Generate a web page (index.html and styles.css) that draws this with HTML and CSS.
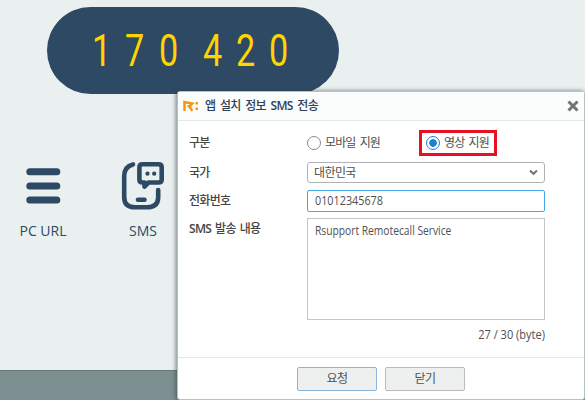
FILE: index.html
```html
<!DOCTYPE html>
<html lang="ko">
<head>
<meta charset="utf-8">
<title>SMS</title>
<link rel="stylesheet" href="styles.css">
</head>
<body>
<main class="page">
  <div class="code"><span class="one">1</span><span>7</span><span>0</span><span class="gap">4</span><span>2</span><span>0</span></div>
  <nav class="methods">
    <div class="method">
      <svg width="50" height="50" viewBox="0 0 50 50"><path d="M11.800 10.800H38.800M11.800 25H38.800M11.800 39H38.800" class="bars"/></svg>
      <span class="pc">PC URL</span>
    </div>
    <div class="method">
      <svg width="50" height="50" viewBox="0 0 50 50"><path class="line" d="M15 3.400Q6.200 5.500 6.200 15V36Q6.200 46.300 17 46.300H29Q40.200 46.300 40.200 36V29"/><path class="line" d="M20 38.700H26.500"/><path class="line" d="M24.500 3.300H40.500Q43.700 3.300 43.700 6.300V18.500Q43.700 21.500 40.500 21.500H30.500L26.500 25.500V21.500H24.500Q21.400 21.500 21.400 18.500V6.300Q21.400 3.300 24.500 3.300Z"/><circle cx="29.500" cy="12.700" r="2.100"/><circle cx="36.200" cy="12.700" r="2.100"/></svg>
      <span class="sms">SMS</span>
    </div>
  </nav>
  <footer class="bottom"></footer>
</main>
<section class="dialog">
  <header class="head">
    <svg class="logo" width="17" height="12" viewBox="0 0 17 12"><path class="r" d="M1.500 11V2L9.200 3.500L6.500 6.300L9.200 11M6.500 6.300H4.500"/><path class="dots" d="M12.500 2H15V4.500H12.500ZM12.500 7.500H15V10H12.500Z"/></svg>
    <h1>앱 설치 정보 <b>SMS</b> 전송</h1>
    <svg class="close" width="12" height="12" viewBox="0 0 12 12"><path d="M1.500 1.500L10.500 10.500M10.500 1.500L1.500 10.500"/></svg>
  </header>
  <div class="form">
    <div class="label">구분</div>
    <div class="choices"><div class="choice"><i class="radio"></i><span>모바일 지원</span></div><div class="choice marked"><i class="radio on"></i><span>영상 지원</span></div></div>
    <div class="label">국가</div>
    <div class="field select"><span>대한민국</span><svg width="9" height="7" viewBox="0 0 9 7"><path d="M1 1.500L4.500 4.800L8 1.500"/></svg></div>
    <div class="label phone">전화번호</div>
    <div class="field input"><span>01012345678</span></div>
    <div class="label content"><b>SMS</b> 발송 내용</div>
    <div class="field area"><span>Rsupport Remotecall Service</span></div>
    <div class="count">27 / 30 (byte)</div>
  </div>
  <footer class="actions"><button class="primary">요청</button><button>닫기</button></footer>
</section>
</body>
</html>
```
FILE: styles.css
```css
* { box-sizing: border-box; }
body { margin: 0; width: 585px; height: 400px; overflow: hidden; font: 12px "Open Sans", "Noto Sans CJK KR", sans-serif; color: #505050; background: #eaf0f0; }
.page { height: 400px; padding-top: 7px; display: flex; flex-direction: column; }
.code { width: 292px; height: 87px; margin-left: 47px; padding-left: 38px; border-radius: 44px; background: #2e4963; color: #ffd400; display: flex; align-items: center; font: 400 45px/87px Roboto, sans-serif; }
.code span { width: 33.300px; flex: none; display: flex; justify-content: center; transform: scaleX(.76); }
.code .gap { margin-left: 11px; }
.methods { display: flex; margin: 67px 0 0 18px; }
.method { width: 100px; display: flex; flex-direction: column; align-items: flex-start; color: #2e4963; }
.method svg { fill: #2e4963; }
.method span { font-size: 14px; line-height: 20px; margin-top: 10px; width: 50px; text-align: center; white-space: nowrap; }
.bars { stroke: #2e4963; stroke-width: 7; stroke-linecap: round; }
.line { fill: none; stroke: #2e4963; stroke-width: 4.600; stroke-linecap: round; stroke-linejoin: round; }
.bottom { margin-top: auto; height: 30px; background: #7c8e8f; border-top: 1px solid #687a7b; }
.dialog { position: absolute; left: 177px; top: 91px; width: 408px; height: 309px; background: #fff; border: 1px solid #b7c2c4; border-radius: 3px; box-shadow: -1px 0 4px rgba(40,60,65,.65); display: flex; flex-direction: column; }
.head { height: 29px; flex: none; display: flex; align-items: center; padding: 0 5px 0 5px; background: #fbfcfc; border-bottom: 1px solid #e4e7e8; }
.r { fill: none; stroke: #f7960f; stroke-width: 2.500; }
.dots { fill: #f7960f; }
h1 { margin: 0 0 0 5px; font-size: 12px; line-height: 20px; font-weight: 500; color: #2e4158; white-space: nowrap; letter-spacing: -.7px; word-spacing: 2.200px; }
b { font-weight: 600; letter-spacing: -.7px; }
.close { margin-left: auto; }
.close path { stroke: #6d7578; stroke-width: 3; }
.form { padding: 9px 39px 0 12px; display: grid; grid-template-columns: 117px 238px; grid-template-rows: 26px 21px 22px 103px 20px; row-gap: 6px; height: 236px; flex: none; }
.label { font-weight: 500; color: #454545; line-height: 20px; align-self: center; white-space: nowrap; letter-spacing: -.7px; word-spacing: 1.500px; margin-left: -1px; }
.phone { padding-top: 1px; }
.content { align-self: start; padding-top: 2px; }
.choices { display: flex; justify-content: space-between; width: 190px; letter-spacing: -.9px; word-spacing: 2px; }
.choice { display: flex; align-items: center; gap: 4px; white-space: nowrap; line-height: 18px; }
.marked { border: 3px solid #e81123; width: 78px; padding-left: 4px; }
.radio { width: 14px; height: 14px; border: 1px solid #8a8a8a; border-radius: 50%; flex: none; }
.radio.on { border-color: #1983d1; background: radial-gradient(circle, #1983d1 0 3.500px, #fff 4px); }
.field { border: 1px solid #aeb2b4; border-radius: 2px; display: flex; align-items: center; padding: 0 7px; line-height: 18px; white-space: nowrap; }
.select { padding: 0 6px; border-radius: 3px; justify-content: space-between; letter-spacing: -.6px; }
.select path { fill: none; stroke: #6d7578; stroke-width: 2; }
.input { border-color: #45a9ee; height: 22px; margin-top: 1px; }
.input span { transform: scaleX(.9); transform-origin: left; }
.area { align-items: flex-start; padding-top: 3px; border-color: #c3c7ca; border-radius: 0; margin-top: 1px; }
.area span { transform: scaleX(.855); transform-origin: left; }
.count { grid-column: 2; text-align: right; line-height: 18px; transform: scaleX(.92); transform-origin: right; }
.actions { border-top: 1px solid #e4e7e8; height: 42px; display: flex; justify-content: center; gap: 8px; padding-top: 9px; }
button { width: 80px; height: 24px; padding: 0; border: 1px solid #b8bcbd; border-radius: 2px; background: #eef0f0; font: inherit; line-height: 20px; color: #505050; letter-spacing: -.5px; }
.primary { border-color: #88b5d8; }
```
